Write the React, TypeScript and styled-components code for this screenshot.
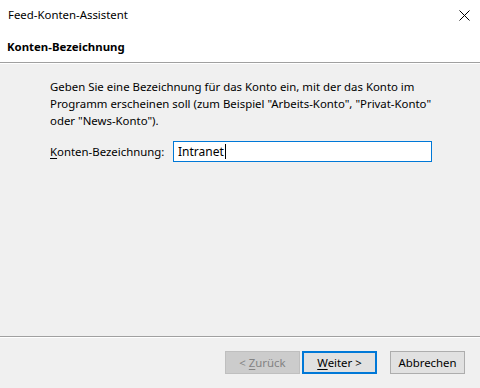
import React from "react";
import styled, { createGlobalStyle } from "styled-components";

const GlobalStyle = createGlobalStyle`
  html, body { margin: 0; padding: 0; background: #f0f0f0; }
  body { font-family: "Noto Sans", "Open Sans", sans-serif; font-size: 11.4px; color: #000; }
  * { box-sizing: border-box; }
`;

const Window = styled.div`
  width: 480px;
  height: 388px;
  display: flex;
  flex-direction: column;
  background: #f0f0f0;
  overflow: hidden;
`;

const TitleBar = styled.div`
  height: 30px;
  background: #fff;
  display: flex;
  align-items: center;
  justify-content: space-between;
  padding: 0 10px 0 8px;
`;

const TitleText = styled.span`
  font-size: 11.4px;
  line-height: 16px;
`;

const CloseButton = styled.div`
  width: 12px;
  height: 12px;
  display: flex;
  align-items: center;
  justify-content: center;
  margin-top: 1px;
`;

const Header = styled.div`
  height: 32px;
  background: #fff;
  display: flex;
  align-items: center;
  padding: 0 0 0 7px;
  font-weight: 700;
  font-size: 11.4px;
`;

const Separator = styled.div`
  height: 2px;
  border-top: 1px solid #a0a0a0;
  border-bottom: 1px solid #ffffff;
  flex: none;
`;

const Content = styled.div`
  flex: 1;
  padding: 14px 20px 0 50px;
  display: flex;
  flex-direction: column;
  gap: 12px;
`;

const Description = styled.div`
  display: flex;
  flex-direction: column;
`;

const Line = styled.span`
  line-height: 17px;
  white-space: nowrap;
`;

const FieldRow = styled.div`
  display: flex;
  align-items: center;
  gap: 10px;
`;

const Label = styled.label`
  width: 113px;
  white-space: nowrap;
`;

const Mnemonic = styled.span`
  text-decoration: underline;
  text-underline-offset: 2px;
`;

const TextInput = styled.div`
  width: 259px;
  height: 21px;
  border: 1px solid #0078d7;
  background: #fff;
  display: flex;
  align-items: center;
  padding-left: 4px;
  font-size: 12px;
`;

const Caret = styled.span`
  display: inline-block;
  width: 1px;
  height: 15px;
  background: #000;
  margin-left: 1px;
`;

const Footer = styled.div`
  height: 50px;
  display: flex;
  justify-content: flex-end;
  align-items: flex-start;
  padding: 13px 15px 0 0;
`;

const Button = styled.div<{ $variant?: "disabled" | "default" | "normal"; $gap?: number }>`
  width: 75px;
  height: 23px;
  display: flex;
  align-items: center;
  justify-content: center;
  margin-left: ${(p) => p.$gap ?? 0}px;
  background: ${(p) => (p.$variant === "disabled" ? "#cccccc" : "#e1e1e1")};
  color: ${(p) => (p.$variant === "disabled" ? "#838383" : "#000")};
  border: ${(p) =>
    p.$variant === "default"
      ? "2px solid #0078d7"
      : p.$variant === "disabled"
      ? "1px solid #bfbfbf"
      : "1px solid #adadad"};
  font-size: 11.4px;
`;

const ButtonLabel = styled.span`
  white-space: pre;
`;

export default function App() {
  return (
    <>
      <GlobalStyle />
      <Window>
        <TitleBar>
          <TitleText>Feed-Konten-Assistent</TitleText>
          <CloseButton>
            <svg width="11" height="11" viewBox="0 0 11 11">
              <path d="M0.5 0.5 L10.5 10.5 M10.5 0.5 L0.5 10.5" stroke="#000" strokeWidth="1" fill="none" />
            </svg>
          </CloseButton>
        </TitleBar>
        <Header>Konten-Bezeichnung</Header>
        <Separator />
        <Content>
          <Description>
            <Line>Geben Sie eine Bezeichnung für das Konto ein, mit der das Konto im</Line>
            <Line>Programm erscheinen soll (zum Beispiel "Arbeits-Konto", "Privat-Konto"</Line>
            <Line>oder "News-Konto").</Line>
          </Description>
          <FieldRow>
            <Label>
              <Mnemonic>K</Mnemonic>onten-Bezeichnung:
            </Label>
            <TextInput>
              Intranet
              <Caret />
            </TextInput>
          </FieldRow>
        </Content>
        <Separator />
        <Footer>
          <Button $variant="disabled">
            <ButtonLabel>
              {"< "}
              <Mnemonic>Z</Mnemonic>
              {"urück"}
            </ButtonLabel>
          </Button>
          <Button $variant="default" $gap={2}>
            <ButtonLabel>
              <Mnemonic>W</Mnemonic>
              {"eiter >"}
            </ButtonLabel>
          </Button>
          <Button $variant="normal" $gap={13}>
            Abbrechen
          </Button>
        </Footer>
      </Window>
    </>
  );
}
